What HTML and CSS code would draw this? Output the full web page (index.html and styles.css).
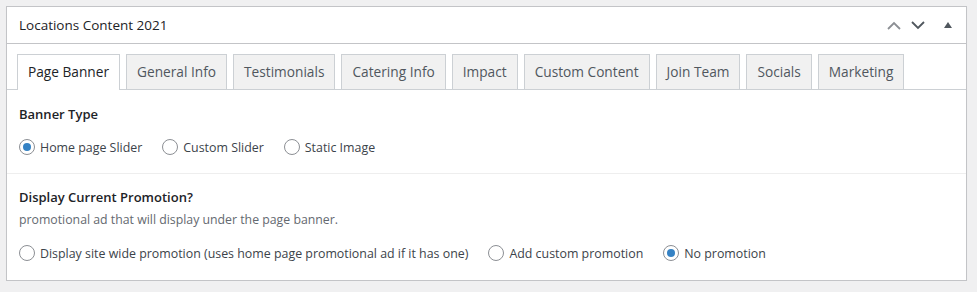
FILE: index.html
```html
<!DOCTYPE html>
<html lang="en">
<head>
  <meta charset="UTF-8" />
  <title>Locations Content 2021</title>
  <link rel="stylesheet" href="styles.css">
</head>
<body>

  <div class="postbox">
    <div class="postbox-header">
      <h2>Locations Content 2021</h2>
      <div class="handle-actions">
        <button class="handle-btn up" aria-label="Move up">
          <svg width="14" height="9" viewBox="0 0 14 9"><path d="M1 8 L7 2 L13 8" fill="none" stroke="currentColor" stroke-width="1.8"/></svg>
        </button>
        <button class="handle-btn down" aria-label="Move down">
          <svg width="14" height="9" viewBox="0 0 14 9"><path d="M1 1 L7 7 L13 1" fill="none" stroke="currentColor" stroke-width="1.8"/></svg>
        </button>
        <button class="handle-btn toggle" aria-label="Toggle panel">
          <svg width="8" height="6" viewBox="0 0 8 6"><path d="M0 6 L4 0 L8 6 Z" fill="currentColor"/></svg>
        </button>
      </div>
    </div>

    <div class="tab-wrap">
      <ul class="tab-group">
        <li class="active"><a href="#">Page Banner</a></li>
        <li><a href="#">General Info</a></li>
        <li><a href="#">Testimonials</a></li>
        <li><a href="#">Catering Info</a></li>
        <li><a href="#">Impact</a></li>
        <li><a href="#">Custom Content</a></li>
        <li><a href="#">Join Team</a></li>
        <li><a href="#">Socials</a></li>
        <li><a href="#">Marketing</a></li>
      </ul>
    </div>

    <div class="field">
      <div class="field-label">Banner Type</div>
      <ul class="radio-list">
        <li><label><span class="radio checked"></span>Home page Slider</label></li>
        <li><label><span class="radio"></span>Custom Slider</label></li>
        <li><label><span class="radio"></span>Static Image</label></li>
      </ul>
    </div>

    <div class="field">
      <div class="field-label">Display Current Promotion?</div>
      <p class="description">promotional ad that will display under the page banner.</p>
      <ul class="radio-list">
        <li><label><span class="radio"></span>Display site wide promotion (uses home page promotional ad if it has one)</label></li>
        <li><label><span class="radio"></span>Add custom promotion</label></li>
        <li><label><span class="radio checked"></span>No promotion</label></li>
      </ul>
    </div>
  </div>

</body>
</html>
```

FILE: styles.css
```css
body {
  margin: 0;
  padding: 6px 10px 0 6px;
  background: #f0f0f1;
  font-family: "Open Sans", "Noto Sans", sans-serif;
  color: #1d2327;
}
.postbox {
  background: #fff;
  border: 1px solid #c3c4c7;
  box-shadow: 0 1px 1px rgba(0, 0, 0, 0.04);
}
.postbox-header {
  display: flex;
  align-items: center;
  justify-content: space-between;
  height: 36px;
  padding: 0 0 0 12px;
  border-bottom: 1px solid #c3c4c7;
}
.postbox-header h2 {
  margin: 0;
  font-size: 13.5px;
  font-weight: 400;
  color: #1d2327;
}
.handle-actions {
  display: flex;
  align-items: center;
}
.handle-btn {
  border: 0;
  background: none;
  padding: 0;
  width: 24px;
  height: 36px;
  display: flex;
  align-items: center;
  justify-content: center;
}
.handle-btn.up {
  color: #8c8f94;
}
.handle-btn.down {
  color: #50575e;
}
.handle-btn.toggle {
  width: 36px;
  color: #50575e;
}

/* tabs */
.tab-wrap {
  padding: 10px 10px 0;
  border-bottom: 1px solid #ccd0d4;
}
.tab-group {
  list-style: none;
  margin: 0 0 -1px;
  padding: 0;
  display: flex;
  gap: 6px;
}
.tab-group a {
  display: block;
  padding: 5px 10px;
  font-size: 13.7px;
  line-height: 24px;
  color: #50575e;
  text-decoration: none;
  background: #f1f1f1;
  border: 1px solid #ccd0d4;
  border-bottom: 0;
}
.tab-group li.active a {
  background: #fff;
  color: #1d2327;
  padding-bottom: 6px;
}

/* fields */
.field {
  padding: 15px 12px 14px;
}
.field + .field {
  border-top: 1px solid #eeeeee;
  padding-top: 14px;
  padding-bottom: 15px;
}
.field-label {
  font-size: 13px;
  font-weight: 600;
  line-height: 18px;
  color: #1d2327;
}
.description {
  margin: 5px 0 0;
  font-size: 12.3px;
  line-height: 18px;
  color: #646970;
}
.radio-list {
  list-style: none;
  margin: 12px 0 0;
  padding: 0;
  display: flex;
  gap: 20px;
}
.radio-list label {
  display: flex;
  align-items: center;
  gap: 5px;
  height: 24px;
  font-size: 12.4px;
  color: #3c434a;
}
.radio {
  width: 14px;
  height: 14px;
  border: 1px solid #8c8f94;
  border-radius: 50%;
  background: #fff;
  display: flex;
  align-items: center;
  justify-content: center;
}
.radio.checked::before {
  content: "";
  width: 8px;
  height: 8px;
  border-radius: 50%;
  background: #3582c4;
}
```
